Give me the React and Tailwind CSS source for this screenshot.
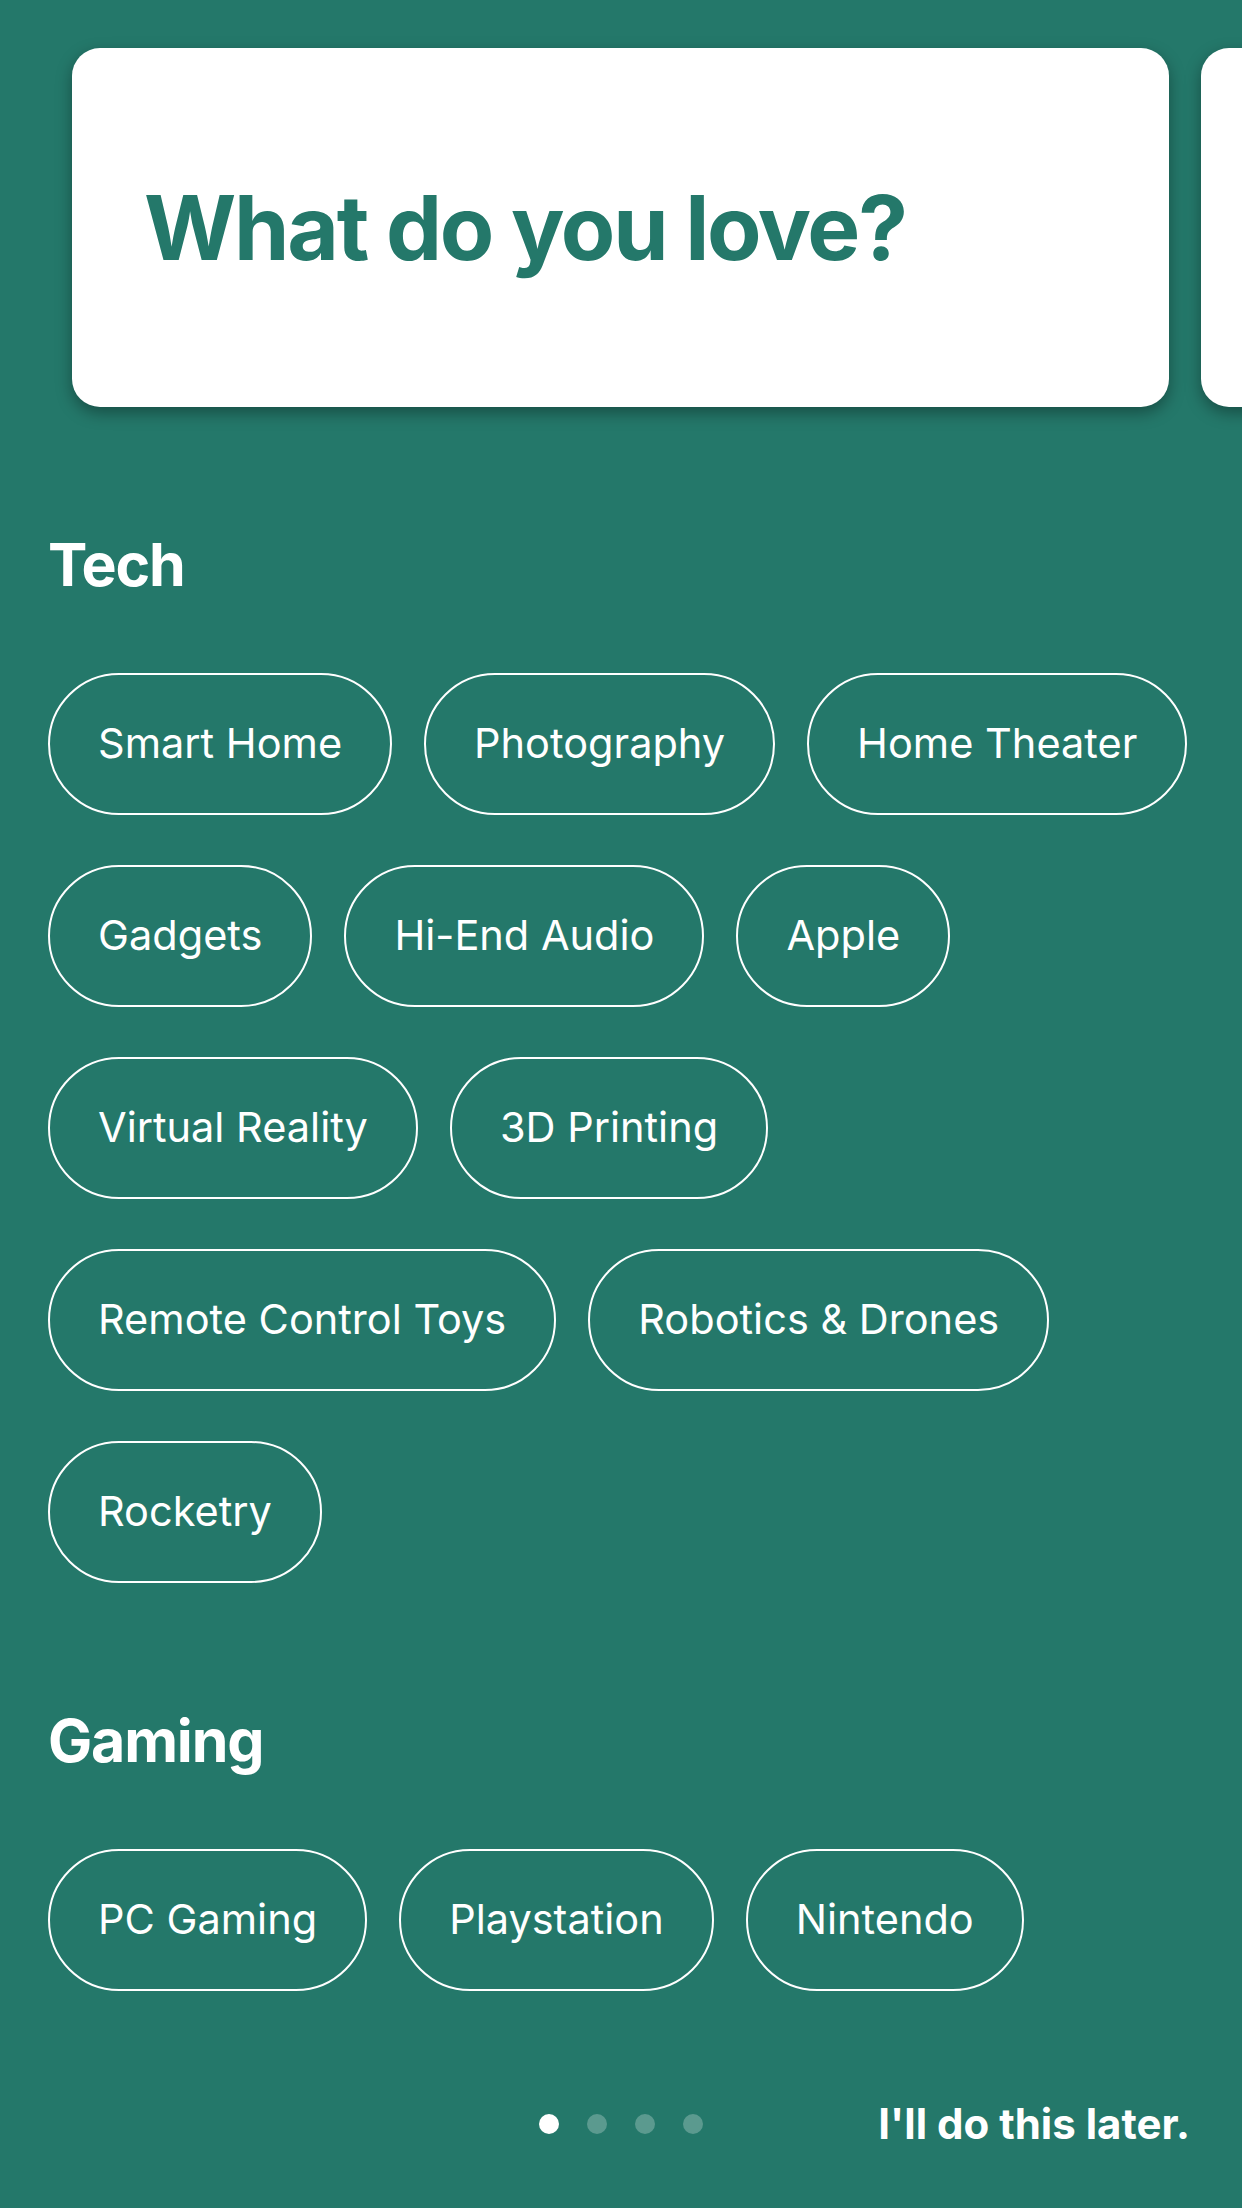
import React from "react";

const tech = [
  "Smart Home",
  "Photography",
  "Home Theater",
  "Gadgets",
  "Hi-End Audio",
  "Apple",
  "Virtual Reality",
  "3D Printing",
  "Remote Control Toys",
  "Robotics & Drones",
  "Rocketry",
];

const gaming = ["PC Gaming", "Playstation", "Nintendo"];

function Chip({ label }) {
  return (
    <div className="h-[142px] px-[48px] border-2 border-white rounded-full flex items-center text-[41.5px] leading-none text-white font-normal whitespace-nowrap">
      {label}
    </div>
  );
}

function Section({ title, items }) {
  return (
    <section className="mt-[128px]">
      <h2 className="pl-[48px] text-[59px] leading-none font-bold text-white tracking-[-0.02em]">
        {title}
      </h2>
      <div className="mt-[79px] pl-[48px] pr-[20px] flex flex-wrap gap-x-[32px] gap-y-[50px]">
        {items.map((it) => (
          <Chip key={it} label={it} />
        ))}
      </div>
    </section>
  );
}

export default function App() {
  return (
    <div className="w-[1242px] min-h-[2208px] bg-[#24786a] overflow-hidden font-['Inter',sans-serif] flex flex-col">
      <div className="flex gap-[32px] pl-[72px] pt-[48px]">
        <div className="shrink-0 w-[1097px] h-[359px] bg-white rounded-[28px] shadow-[0_6px_16px_rgba(0,0,0,0.35)] flex items-center pl-[72px]">
          <h1 className="text-[89px] leading-none font-bold text-[#24786a] tracking-[-0.025em]">
            What do you love?
          </h1>
        </div>
        <div className="shrink-0 w-[1097px] h-[359px] bg-white rounded-[28px] shadow-[0_6px_16px_rgba(0,0,0,0.35)]" />
      </div>

      <Section title="Tech" items={tech} />
      <Section title="Gaming" items={gaming} />

      <div className="mt-[93px] h-[80px] px-[55px] grid grid-cols-[1fr_auto_1fr] items-center">
        <div />
        <div className="flex items-center gap-[28px]">
          <span className="w-[20px] h-[20px] rounded-full bg-white" />
          <span className="w-[20px] h-[20px] rounded-full bg-white/25" />
          <span className="w-[20px] h-[20px] rounded-full bg-white/25" />
          <span className="w-[20px] h-[20px] rounded-full bg-white/25" />
        </div>
        <div className="flex justify-end -mr-[3px]">
          <span className="text-[42px] leading-none font-bold text-white whitespace-nowrap">
            I'll do this later.
          </span>
        </div>
      </div>
    </div>
  );
}
